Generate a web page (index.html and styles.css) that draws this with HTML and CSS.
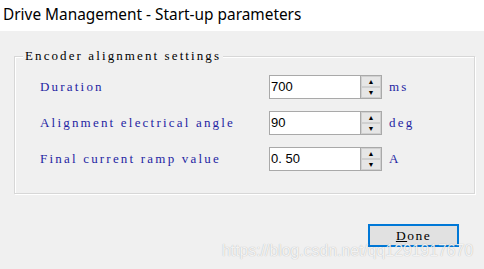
FILE: index.html
```html
<!DOCTYPE html>
<html lang="en">
<head>
    <meta charset="UTF-8">
    <meta name="viewport" content="width=device-width, initial-scale=1.0">
    <title>Drive Management - Start-up parameters</title>
    <link rel="stylesheet" href="styles.css">
</head>
<body>
    <div class="titlebar">Drive Management - Start-up parameters</div>
    <div class="content">
        <div class="groupbox">
            <span class="legend">Encoder alignment settings</span>
            <div class="rows">
                <span class="label">Duration</span>
                <div class="spin">
                    <span class="value">700</span>
                    <div class="arrows"><span class="up">&#9650;</span><span class="down">&#9660;</span></div>
                </div>
                <span class="unit">ms</span>

                <span class="label">Alignment electrical angle</span>
                <div class="spin">
                    <span class="value">90</span>
                    <div class="arrows"><span class="up">&#9650;</span><span class="down">&#9660;</span></div>
                </div>
                <span class="unit">deg</span>

                <span class="label">Final current ramp value</span>
                <div class="spin">
                    <span class="value">0.&nbsp;50</span>
                    <div class="arrows"><span class="up">&#9650;</span><span class="down">&#9660;</span></div>
                </div>
                <span class="unit">A</span>
            </div>
        </div>
        <div class="footer">
            <button class="done"><u>D</u>one</button>
        </div>
        <div class="watermark">https://blog.csdn.net/qq1291917670</div>
    </div>
</body>
</html>
```

FILE: styles.css
```css
body {
    margin: 0;
    background-color: #f0f0f0;
    font-family: "Liberation Serif", serif;
    width: 484px;
    height: 269px;
    overflow: hidden;
}
.titlebar {
    background-color: #ffffff;
    height: 31px;
    line-height: 30px;
    padding-left: 3px;
    font-family: "Noto Sans", sans-serif;
    font-size: 15.4px;
    color: #000000;
}
.content {
    position: relative;
    padding: 25px 9px 0 14px;
}
.groupbox {
    position: relative;
    width: 459px;
    height: 136px;
    border: 1px solid #d7d7d7;
    box-shadow: inset 1px 1px 0 #ffffff, 1px 1px 0 #ffffff;
}
.legend {
    position: absolute;
    left: 8px;
    top: -9px;
    padding: 0 2px;
    background-color: #f0f0f0;
    font-size: 13px;
    letter-spacing: 2.1px;
    line-height: 16px;
    color: #000000;
}
.rows {
    display: grid;
    grid-template-columns: 222px 113px auto;
    column-gap: 7px;
    row-gap: 12px;
    align-items: center;
    padding: 18px 0 0 25px;
}
.label,
.unit {
    font-size: 13px;
    letter-spacing: 2.2px;
    color: #1f1fa3;
}
.spin {
    display: flex;
    height: 24px;
    box-sizing: border-box;
    border: 1px solid #a9a9a9;
    background-color: #ffffff;
}
.value {
    flex: 1;
    font-family: "Liberation Sans", sans-serif;
    font-size: 13px;
    line-height: 22px;
    padding-left: 1px;
    color: #000000;
}
.arrows {
    display: flex;
    flex-direction: column;
    width: 20px;
    border-left: 1px solid #a9a9a9;
    background-color: #e6e6e6;
}
.arrows span {
    flex: 1;
    display: flex;
    align-items: center;
    justify-content: center;
    font-size: 7px;
    color: #000000;
    border: 1px solid #d0d0d0;
    box-sizing: border-box;
}
.footer {
    display: flex;
    justify-content: flex-end;
    padding: 30px 16px 0 0;
}
.done {
    width: 91px;
    height: 23px;
    margin: 0;
    padding: 0;
    border: 2px solid #0078d7;
    background-color: #e1e1e1;
    font-family: "Liberation Serif", serif;
    font-size: 13.5px;
    letter-spacing: 1.5px;
    color: #000000;
}
.watermark {
    position: absolute;
    left: 222px;
    top: 211px;
    font-family: "Liberation Sans", sans-serif;
    font-size: 15.8px;
    color: rgba(255, 255, 255, 0.85);
    text-shadow: 0 0 1px rgba(0, 0, 0, 0.3);
}
```
